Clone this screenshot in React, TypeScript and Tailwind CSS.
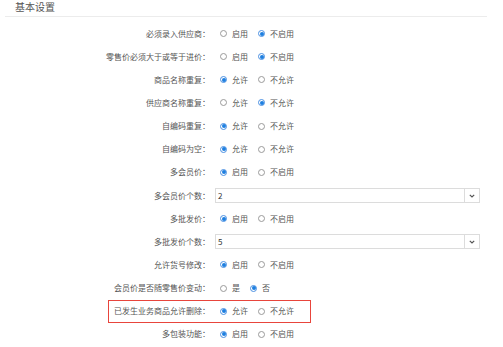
import React from "react";

type Row =
  | { label: string; kind: "radio"; options: [string, string]; checked: number; marked?: boolean }
  | { label: string; kind: "select"; value: string };

const rows: Row[] = [
  { label: "必须录入供应商：", kind: "radio", options: ["启用", "不启用"], checked: 1 },
  { label: "零售价必须大于或等于进价：", kind: "radio", options: ["启用", "不启用"], checked: 1 },
  { label: "商品名称重复：", kind: "radio", options: ["允许", "不允许"], checked: 0 },
  { label: "供应商名称重复：", kind: "radio", options: ["允许", "不允许"], checked: 1 },
  { label: "自编码重复：", kind: "radio", options: ["允许", "不允许"], checked: 0 },
  { label: "自编码为空：", kind: "radio", options: ["允许", "不允许"], checked: 0 },
  { label: "多会员价：", kind: "radio", options: ["启用", "不启用"], checked: 0 },
  { label: "多会员价个数：", kind: "select", value: "2" },
  { label: "多批发价：", kind: "radio", options: ["启用", "不启用"], checked: 0 },
  { label: "多批发价个数：", kind: "select", value: "5" },
  { label: "允许货号修改：", kind: "radio", options: ["启用", "不启用"], checked: 0 },
  { label: "会员价是否随零售价变动：", kind: "radio", options: ["是", "否"], checked: 1 },
  { label: "已发生业务商品允许删除：", kind: "radio", options: ["允许", "不允许"], checked: 0, marked: true },
  { label: "多包装功能：", kind: "radio", options: ["启用", "不启用"], checked: 0 },
];

const Radio = ({ on }: { on: boolean }) =>
  on ? (
    <span className="w-[7px] h-[7px] rounded-full border border-[#4a90e2] bg-white flex items-center justify-center shrink-0">
      <span className="w-[4px] h-[4px] rounded-full bg-[#1e7fe0]" />
    </span>
  ) : (
    <span className="w-[7px] h-[7px] rounded-full border border-[#9a9a9a] bg-white shrink-0" />
  );

export default function App() {
  return (
    <div className="w-[503px] h-[347px] bg-white overflow-hidden font-['Noto_Sans_CJK_SC',sans-serif] text-[8px] text-[#555]">
      {/* header */}
      <div className="mx-[5px] w-[482px] h-[17px] border-b border-[#ececec] pl-[10px] flex items-center">
        <span className="text-[10px] leading-none text-[#555] -mt-[3px]">基本设置</span>
      </div>

      <div className="pt-[5px]">
        {rows.map((r) => (
          <div key={r.label} className="relative h-[23.15px] flex items-center">
            {r.kind === "radio" && r.marked && (
              <span className="absolute left-[108px] w-[203px] top-0 bottom-0 border-[1.5px] border-[#e8453c]" />
            )}
            <div className="w-[210px] text-right leading-none">{r.label}</div>
            {r.kind === "radio" ? (
              <div className="ml-[10px] flex items-center leading-none">
                {r.options.map((o, i) => (
                  <label key={o} className="flex items-center gap-[5px] mr-[10px]">
                    <Radio on={r.checked === i} />
                    <span>{o}</span>
                  </label>
                ))}
              </div>
            ) : (
              <div className="ml-[5px] w-[265px] h-[15px] border border-[#dcdcdc] flex items-center bg-white">
                <span className="flex-1 pl-[2px] text-[#333] leading-none">{r.value}</span>
                <span className="w-[15px] h-full border-l border-[#dcdcdc] flex items-center justify-center">
                  <svg width="6" height="4" viewBox="0 0 6 4">
                    <path d="M0.8 0.8 L3 3 L5.2 0.8" fill="none" stroke="#555" strokeWidth="1.2" />
                  </svg>
                </span>
              </div>
            )}
          </div>
        ))}
      </div>
    </div>
  );
}
